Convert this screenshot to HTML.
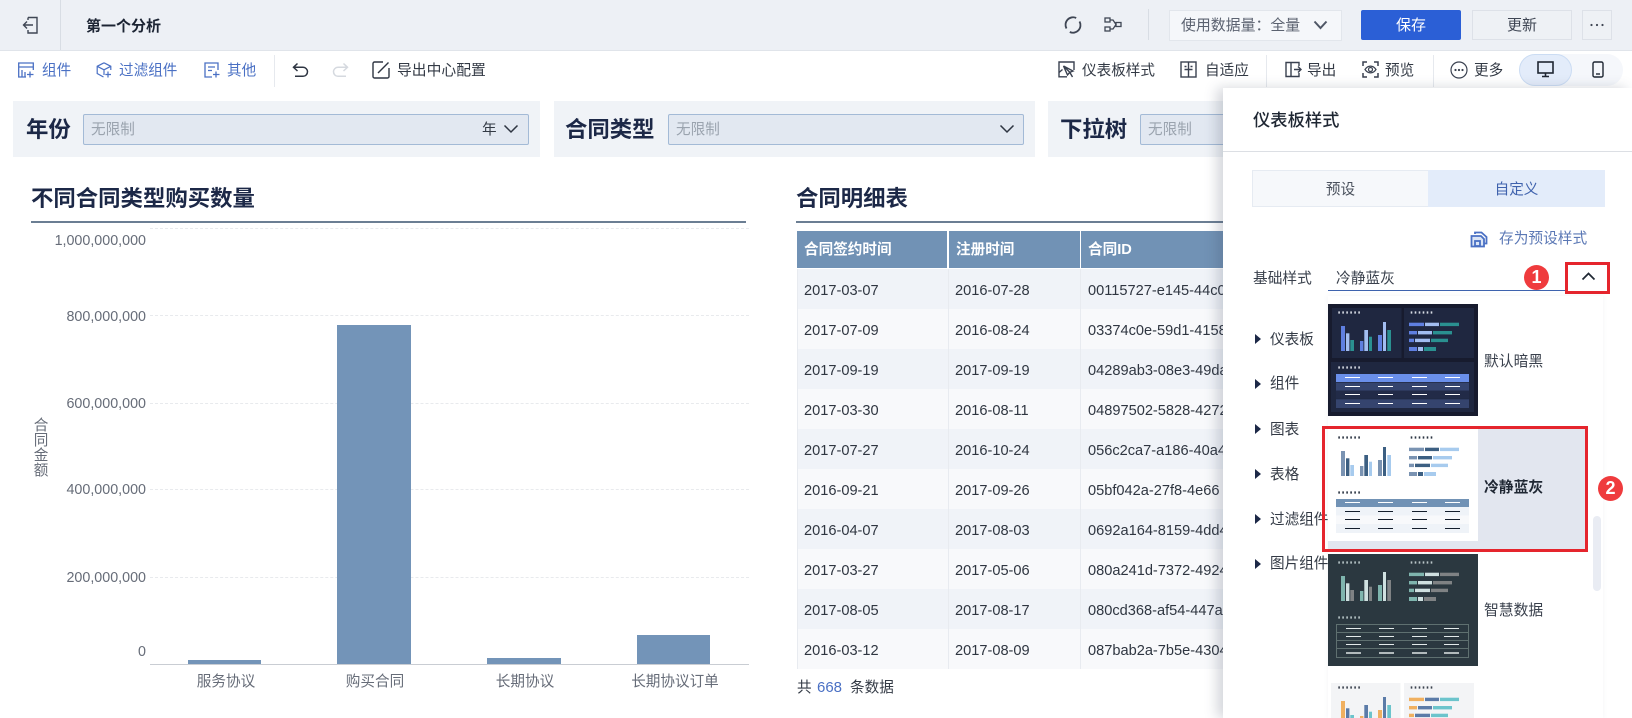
<!DOCTYPE html>
<html lang="zh"><head><meta charset="utf-8"><title>第一个分析</title>
<style>
html,body{margin:0;padding:0;background:#fff}
body{width:1632px;height:718px;position:relative;overflow:hidden;font-family:"Liberation Sans","Noto Sans CJK SC",sans-serif;font-size:14.6px;color:#333a45}
.a{position:absolute}
.t{position:absolute;white-space:nowrap;line-height:20px;height:20px}
.blue{color:#4a70c4}
.l{font-size:22.4px;font-weight:700;color:#1c2847;line-height:30px;height:30px}
.inp{position:absolute;top:114px;height:29px;background:#e2e8f1;border:1px solid #a3bad6;border-radius:2px;box-sizing:content-box}
.ph{color:#9aa3ae}
.f{position:absolute;top:101px;height:56px;background:#f0f3f7}
.yl{position:absolute;right:1486px;white-space:nowrap;line-height:20px;color:#666c78;font-size:14.3px}
.xl{position:absolute;top:672px;width:120px;text-align:center;line-height:20px;color:#666c78}
.bar{position:absolute;background:#7394b8}
.g{position:absolute;left:150px;width:599px;border-top:1px dashed #e8eaed}
.r{position:absolute;left:797px;width:426px;height:40px;line-height:40px;color:#2f3641;white-space:nowrap;overflow:hidden}
.r span{position:absolute;top:1.5px}
.r .c1{left:7px}.r .c2{left:158px}.r .c3{left:291px}
.r.o{background:#f0f3f8}.r.e{background:#f8f9fb}
.th{position:absolute;top:231px;height:37px;line-height:39px;background:#7192b5;color:#fff;font-weight:700;box-sizing:border-box;padding-left:7px}
.tri{position:absolute;left:1255px;width:0;height:0;border-left:6px solid #1c2847;border-top:5px solid transparent;border-bottom:5px solid transparent}
svg.i{position:absolute;overflow:visible;fill:none}
.bd{position:absolute;width:25px;height:25px;border-radius:50%;background:#ef3b3d;color:#fff;font-size:18px;font-weight:700;line-height:25px;text-align:center}
</style></head><body>

<svg width="0" height="0" style="position:absolute">
<symbol id="th" viewBox="0 0 150 112">
<g style="fill:var(--a)"><rect x="13" y="22" width="4" height="25"/><rect x="32" y="37" width="3.4" height="10"/><rect x="50" y="31" width="4" height="16"/><rect x="81" y="18.7" width="15" height="3.4"/><rect x="81" y="27" width="8" height="3.4"/><rect x="81" y="34.7" width="5" height="3.4"/><rect x="81" y="43" width="8" height="4"/></g>
<g style="fill:var(--b)"><rect x="18" y="29.3" width="3.4" height="17.7"/><rect x="36.3" y="26" width="3.7" height="21"/><rect x="55" y="18" width="3" height="29"/><rect x="97" y="18.7" width="14" height="3.4"/><rect x="90" y="27" width="14" height="3.4"/><rect x="87" y="34.7" width="15" height="3.4"/><rect x="90" y="43" width="5" height="4"/></g>
<g style="fill:var(--c)"><rect x="22.3" y="36" width="3.7" height="11"/><rect x="41" y="32.7" width="3" height="14.3"/><rect x="59.3" y="26" width="3.7" height="21"/><rect x="112" y="18.7" width="19" height="3.4"/><rect x="105" y="27" width="19" height="3.4"/><rect x="103" y="34.7" width="17" height="3.4"/><rect x="96" y="43" width="12" height="4"/></g>
<g style="stroke:var(--d)" stroke-width="2.2" stroke-dasharray="1.6 2.4"><path d="M10.3 8.5H34M82.7 8.5H106.5"/></g>
</symbol>
</svg>

<!-- top bar -->
<div class="a" style="left:0;top:0;width:1632px;height:50px;background:#edf0f5;border-bottom:1px solid #e0e4ea"></div>
<div class="a" style="left:60px;top:0;width:1px;height:50px;background:#d8dde4"></div>
<svg class="i" style="left:0;top:0" width="60" height="50" stroke="#3f4654" stroke-width="1.4"><path d="M28 17.5H37V33H28V30M28 17.5V20"/><path d="M33 25H23.5M27 21.5L23.5 25L27 28.5"/></svg>
<div class="t" style="left:86px;top:17px;font-size:15px;font-weight:700;color:#1c2433">第一个分析</div>

<svg class="i" style="left:1064px;top:16px" width="18" height="18" stroke="#3f4654" stroke-width="1.8"><path d="M12.2 2A7.5 7.5 0 0 0 2.5 12.5M5.8 16A7.5 7.5 0 0 0 15.5 5.5"/></svg>
<svg class="i" style="left:1104px;top:17px" width="18" height="16" stroke="#3f4654" stroke-width="1.3"><rect x="1" y="1" width="5" height="4"/><rect x="1" y="10" width="5" height="4"/><rect x="12" y="5.5" width="5" height="4"/><path d="M6 3H9L12 7.5L9 12H6"/></svg>
<div class="a" style="left:1148px;top:9px;width:1px;height:31px;background:#d8dde4"></div>
<div class="a" style="left:1169px;top:10px;width:171px;height:29px;background:#f5f7fa;border:1px solid #e2e6ec"></div>
<div class="t" style="left:1181px;top:16px;color:#5b6270;font-size:14.9px">使用数据量：全量</div>
<svg class="i" style="left:1313px;top:20px" width="16" height="10" stroke="#4f5766" stroke-width="2"><path d="M1.5 1.5L7.5 8L13.5 1.5"/></svg>
<div class="a" style="left:1361px;top:10px;width:100px;height:30px;line-height:32px;background:#2b5fd6;border-radius:2px;color:#fff;text-align:center;font-size:15px">保存</div>
<div class="a" style="left:1472px;top:10px;width:98px;height:28px;line-height:30px;background:#eef1f5;border:1px solid #dde1e8;color:#3f4654;text-align:center;font-size:15px">更新</div>
<div class="a" style="left:1582px;top:10px;width:28px;height:28px;background:#eef1f5;border:1px solid #dde1e8"></div>
<svg class="i" style="left:1582px;top:10px" width="30" height="30"><circle cx="9.5" cy="15" r="1.1" fill="#3f4654"/><circle cx="15" cy="15" r="1.1" fill="#3f4654"/><circle cx="20.5" cy="15" r="1.1" fill="#3f4654"/></svg>

<!-- toolbar left -->
<svg class="i" style="left:18px;top:62px" width="16" height="16" stroke="#4a70c4" stroke-width="1.3"><path d="M15.3 8V1H.7V15H8M.7 5H15.3M4 15V8M7 15V10"/><path d="M12 9.5V15.5M9 12.5H15.5"/></svg>
<div class="t blue" style="left:42px;top:61px">组件</div>
<svg class="i" style="left:96px;top:62px" width="16" height="16" stroke="#4a70c4" stroke-width="1.2"><path d="M8 .8L14.8 4.3V8M8 .8L1.2 4.3V11.5L7.5 15M1.2 4.3L8 7.8L14.8 4.3M8 7.8V13"/><path d="M12 9.5V15.5M9.3 12.5H15"/></svg>
<div class="t blue" style="left:119px;top:61px">过滤组件</div>
<svg class="i" style="left:204px;top:62px" width="16" height="16" stroke="#4a70c4" stroke-width="1.3"><path d="M14 8V1H1V15H8M4 5H11M4 8.5H8"/><path d="M12 9.5V15.5M9 12.5H15.5"/></svg>
<div class="t blue" style="left:227px;top:61px">其他</div>
<div class="a" style="left:274px;top:55px;width:1px;height:32px;background:#e6e9ee"></div>
<svg class="i" style="left:292px;top:62px" width="17" height="16" stroke="#2e3542" stroke-width="1.5"><path d="M5.5 1.5L1.5 5.3L5.5 9M1.5 5.3H11A4.5 4.5 0 0 1 11 14.3H3"/></svg>
<svg class="i" style="left:332px;top:62px" width="17" height="16" stroke="#d5d9df" stroke-width="1.5"><path d="M11.5 1.5L15.5 5.3L11.5 9M15.5 5.3H6A4.5 4.5 0 0 0 6 14.3H14"/></svg>
<svg class="i" style="left:372px;top:61px" width="18" height="18" stroke="#2e3542" stroke-width="1.4"><path d="M11 1H2.5A1.5 1.5 0 0 0 1 2.5V15.5A1.5 1.5 0 0 0 2.5 17H15.5A1.5 1.5 0 0 0 17 15.5V7"/><path d="M6 12L16.5 1.5"/></svg>
<div class="t" style="left:397px;top:61px;font-size:14.8px">导出中心配置</div>

<!-- toolbar right -->
<svg class="i" style="left:1058px;top:61px" width="17" height="17" stroke="#3a4150" stroke-width="1.4"><path d="M9 15.8H1V1H16V9"/><path d="M5.5 5L15 10L11.8 11.3L14.5 16M11.8 11.3L9.5 14L5.5 5Z"/><path d="M1 11.5L4.5 8.5"/></svg>
<div class="t" style="left:1082px;top:61px">仪表板样式</div>
<svg class="i" style="left:1180px;top:61px" width="17" height="17" stroke="#3a4150" stroke-width="1.4"><rect x="1" y="1" width="15" height="15"/><path d="M8.5 1V16M4.5 8.5H12.5M4.5 5.5H6.5M10.5 5.5H12.5"/></svg>
<div class="t" style="left:1205px;top:61px">自适应</div>
<div class="a" style="left:1266px;top:55px;width:1px;height:32px;background:#e6e9ee"></div>
<svg class="i" style="left:1285px;top:61px" width="17" height="17" stroke="#3a4150" stroke-width="1.4"><path d="M6 1.5H1V15.5H6V1.5ZM6 1.5H14V5M6 15.5H14V12"/><path d="M9 8.5H16M13 5.5L16 8.5L13 11.5"/></svg>
<div class="t" style="left:1307px;top:61px">导出</div>
<svg class="i" style="left:1362px;top:61px" width="17" height="17" stroke="#3a4150" stroke-width="1.5"><path d="M1 5V1H5M12 1H16V5M16 12V16H12M5 16H1V12"/><path d="M3 8.5C6 4 11 4 14 8.5C11 13 6 13 3 8.5Z" stroke-width="1.2"/><circle cx="8.5" cy="8.5" r="2" stroke-width="1.2"/></svg>
<div class="t" style="left:1385px;top:61px">预览</div>
<div class="a" style="left:1433px;top:55px;width:1px;height:32px;background:#e6e9ee"></div>
<svg class="i" style="left:1450px;top:61px" width="18" height="18" stroke="#3a4150" stroke-width="1.2"><circle cx="9" cy="9" r="8"/><circle cx="5.5" cy="9" r=".5" fill="#3a4150"/><circle cx="9" cy="9" r=".5" fill="#3a4150"/><circle cx="12.5" cy="9" r=".5" fill="#3a4150"/></svg>
<div class="t" style="left:1474px;top:61px">更多</div>
<div class="a" style="left:1519px;top:54px;width:104px;height:32px;background:#f5f7fb;border-radius:16px"></div>
<div class="a" style="left:1519px;top:54px;width:51px;height:30px;background:#e3ecfa;border:1px solid #cbdcf3;border-radius:16px"></div>
<svg class="i" style="left:1537px;top:61px" width="17" height="17" stroke="#1f2733" stroke-width="1.6"><rect x="1" y="1" width="15" height="11"/><path d="M8.5 12V15.5M5 15.5H12"/></svg>
<svg class="i" style="left:1592px;top:61px" width="12" height="17" stroke="#1f2733" stroke-width="1.4"><rect x="1" y="1" width="10" height="15" rx="1.5"/><path d="M4 13H8"/></svg>

<!-- filters -->
<div class="f" style="left:13px;width:527px"></div>
<div class="t l" style="left:26px;top:115px">年份</div>
<div class="inp" style="left:83px;width:444px"></div>
<div class="t ph" style="left:91px;top:120px">无限制</div>
<div class="t" style="left:482px;top:120px">年</div>
<svg class="i" style="left:503px;top:124px" width="16" height="10" stroke="#2e3542" stroke-width="1.5"><path d="M1.5 1.5L8 8L14.5 1.5"/></svg>

<div class="f" style="left:554px;width:481px"></div>
<div class="t l" style="left:565px;top:115px">合同类型</div>
<div class="inp" style="left:668px;width:354px"></div>
<div class="t ph" style="left:676px;top:120px">无限制</div>
<svg class="i" style="left:999px;top:124px" width="16" height="10" stroke="#2e3542" stroke-width="1.5"><path d="M1.5 1.5L8 8L14.5 1.5"/></svg>

<div class="f" style="left:1048px;width:180px"></div>
<div class="t l" style="left:1060px;top:115px">下拉树</div>
<div class="inp" style="left:1140px;width:90px"></div>
<div class="t ph" style="left:1148px;top:120px">无限制</div>

<!-- chart -->
<div class="t l" style="left:31px;top:184px">不同合同类型购买数量</div>
<div class="a" style="left:31px;top:221px;width:715px;height:2px;background:#6b7e93"></div>
<div class="g" style="top:228px"></div><div class="g" style="top:315px"></div><div class="g" style="top:403px"></div><div class="g" style="top:489px"></div><div class="g" style="top:577px"></div>
<div class="a" style="left:150px;top:664px;width:599px;height:1px;background:#c9cdd3"></div>
<div class="yl" style="top:231px">1,000,000,000</div>
<div class="yl" style="top:307px">800,000,000</div>
<div class="yl" style="top:394px">600,000,000</div>
<div class="yl" style="top:480px">400,000,000</div>
<div class="yl" style="top:568px">200,000,000</div>
<div class="yl" style="top:642px">0</div>
<div class="a" style="left:32px;top:419px;width:18px;color:#666c78;line-height:15px;text-align:center;font-size:14.6px">合<br>同<br>金<br>额</div>
<div class="bar" style="left:188px;top:660px;width:73px;height:4px"></div>
<div class="bar" style="left:337px;top:325px;width:74px;height:339px"></div>
<div class="bar" style="left:487px;top:658px;width:74px;height:6px"></div>
<div class="bar" style="left:637px;top:635px;width:73px;height:29px"></div>
<div class="xl" style="left:166px">服务协议</div>
<div class="xl" style="left:315px">购买合同</div>
<div class="xl" style="left:465px">长期协议</div>
<div class="xl" style="left:615px">长期协议订单</div>

<!-- table -->
<div class="t l" style="left:796px;top:184px">合同明细表</div>
<div class="a" style="left:796px;top:221px;width:430px;height:2px;background:#6b7e93"></div>
<div class="th" style="left:797px;width:150px">合同签约时间</div>
<div class="th" style="left:949px;width:131px">注册时间</div>
<div class="th" style="left:1081px;width:142px">合同ID</div>
<div class="r o" style="top:269px"><span class="c1">2017-03-07</span><span class="c2">2016-07-28</span><span class="c3">00115727-e145-44c0</span></div>
<div class="r e" style="top:309px"><span class="c1">2017-07-09</span><span class="c2">2016-08-24</span><span class="c3">03374c0e-59d1-4158</span></div>
<div class="r o" style="top:349px"><span class="c1">2017-09-19</span><span class="c2">2017-09-19</span><span class="c3">04289ab3-08e3-49da</span></div>
<div class="r e" style="top:389px"><span class="c1">2017-03-30</span><span class="c2">2016-08-11</span><span class="c3">04897502-5828-4272</span></div>
<div class="r o" style="top:429px"><span class="c1">2017-07-27</span><span class="c2">2016-10-24</span><span class="c3">056c2ca7-a186-40a4</span></div>
<div class="r e" style="top:469px"><span class="c1">2016-09-21</span><span class="c2">2017-09-26</span><span class="c3">05bf042a-27f8-4e66</span></div>
<div class="r o" style="top:509px"><span class="c1">2016-04-07</span><span class="c2">2017-08-03</span><span class="c3">0692a164-8159-4dd4</span></div>
<div class="r e" style="top:549px"><span class="c1">2017-03-27</span><span class="c2">2017-05-06</span><span class="c3">080a241d-7372-4924</span></div>
<div class="r o" style="top:589px"><span class="c1">2017-08-05</span><span class="c2">2017-08-17</span><span class="c3">080cd368-af54-447a</span></div>
<div class="r e" style="top:629px"><span class="c1">2016-03-12</span><span class="c2">2017-08-09</span><span class="c3">087bab2a-7b5e-4304</span></div>
<div class="a" style="left:948px;top:269px;width:1px;height:400px;background:#e8ebf0"></div>
<div class="a" style="left:1080px;top:269px;width:1px;height:400px;background:#e8ebf0"></div>
<div class="a" style="left:797px;top:269px;width:1px;height:400px;background:#e8ebf0"></div>
<div class="t" style="left:797px;top:678px">共</div>
<div class="t" style="left:817px;top:678px;color:#4a70c4;font-size:15px">668</div>
<div class="t" style="left:850px;top:678px">条数据</div>

<!-- panel -->
<div class="a" style="left:1223px;top:88px;width:409px;height:630px;background:#fff;box-shadow:-6px 0 12px rgba(60,70,90,.22)"></div>
<div class="t" style="left:1253px;top:110px;font-size:17.3px;color:#1f2733;font-weight:500">仪表板样式</div>
<div class="a" style="left:1223px;top:151px;width:409px;height:1px;background:#dcdfe4"></div>
<div class="a" style="left:1252px;top:170px;width:175px;height:35px;line-height:39px;background:#f6f8fb;border:1px solid #e6ebf2;border-right:0;text-align:center;color:#4a515d">预设</div>
<div class="a" style="left:1428px;top:170px;width:175px;height:35px;line-height:39px;background:#e3ecfa;border:1px solid #e3ecfa;text-align:center;color:#3f62ad;">自定义</div>
<svg class="i" style="left:1470px;top:231px" width="18" height="17" stroke="#4a70c4" stroke-width="1.8"><path d="M5 3V1.5H11.5L16.5 6V12.5H14"/><path d="M1.5 5H11L14 8V15.5H1.5Z" fill="#dbe5f6"/><rect x="5" y="10" width="5" height="5"/></svg>
<div class="t" style="left:1499px;top:229px;color:#5b78b5;font-size:14.7px">存为预设样式</div>

<div class="t" style="left:1253px;top:269px;color:#3a414d;font-size:14.7px">基础样式</div>
<div class="t" style="left:1336px;top:269px;color:#3a414d;font-size:14.7px">冷静蓝灰</div>
<div class="a" style="left:1328px;top:290px;width:238px;height:1px;background:#3e63ae"></div>
<div class="a" style="left:1565px;top:262px;width:39px;height:26px;border:3px solid #e5252d"></div>
<svg class="i" style="left:1581px;top:272px" width="15" height="9" stroke="#1f2733" stroke-width="1.7"><path d="M1.5 7.5L7.5 1.5L13.5 7.5"/></svg>
<div class="bd" style="left:1524px;top:265px">1</div>

<!-- side list -->
<div class="tri" style="top:334px"></div><div class="t" style="left:1270px;top:330px">仪表板</div>
<div class="tri" style="top:379px"></div><div class="t" style="left:1270px;top:374px">组件</div>
<div class="tri" style="top:424px"></div><div class="t" style="left:1270px;top:420px">图表</div>
<div class="tri" style="top:469px"></div><div class="t" style="left:1270px;top:465px">表格</div>
<div class="tri" style="top:514px"></div><div class="t" style="left:1270px;top:510px">过滤组件</div>
<div class="tri" style="top:559px"></div><div class="t" style="left:1270px;top:554px">图片组件</div>

<!-- dropdown -->
<div class="a" style="left:1328px;top:296px;width:275px;height:422px;background:#fff;box-shadow:0 0 5px rgba(90,100,130,.07)"></div>

<!-- dark thumb -->
<svg class="a" style="left:1328px;top:304px;--a:#5f7fe0;--b:#a2bdf0;--c:#2a9090;--d:#d8dce4" width="150" height="112" viewBox="0 0 150 112">
<rect width="150" height="112" fill="#171b2e"/>
<rect x="4" y="4" width="69.5" height="50" fill="#1f2740"/><rect x="76" y="4" width="70" height="50" fill="#1f2740"/><rect x="3" y="58" width="143" height="50" fill="#1f2740"/>
<use href="#th" width="150" height="112"/>
<path d="M10.3 63.5H34" stroke="#d8dce4" stroke-width="2.2" stroke-dasharray="1.6 2.4"/>
<rect x="8" y="70" width="133" height="8" fill="#6a8fea"/><rect x="8" y="78.7" width="133" height="8" fill="#35446e"/><rect x="8" y="86.7" width="133" height="8" fill="#222b48"/><rect x="8" y="95.3" width="133" height="8.7" fill="#35446e"/>
<path d="M17 73.5H32M50 73.5H65M84 73.5H99M117 73.5H132M17 82.5H32M50 82.5H65M84 82.5H99M117 82.5H132M17 90.5H32M50 90.5H65M84 90.5H99M117 90.5H132M17 99.5H32M50 99.5H65M84 99.5H99M117 99.5H132" stroke="#fff" stroke-width="1"/>
</svg>
<div class="t" style="left:1484px;top:352px;color:#3a414d;font-size:14.8px">默认暗黑</div>

<!-- selected -->
<div class="a" style="left:1328px;top:429px;width:258px;height:120px;background:#e2e6ef"></div>
<svg class="a" style="left:1328px;top:429px;--a:#7a93b2;--b:#3c5f82;--c:#a7cbee;--d:#2a3442" width="150" height="112" viewBox="0 0 150 112">
<rect width="150" height="112" fill="#fff"/>
<use href="#th" width="150" height="112"/>
<path d="M10.3 63.5H34" stroke="#2a3442" stroke-width="2.2" stroke-dasharray="1.6 2.4"/>
<rect x="8" y="70" width="133" height="8" fill="#7192b5"/><rect x="8" y="78" width="133" height="8.5" fill="#eff3f8"/><rect x="8" y="86.5" width="133" height="8.5" fill="#f8f9fb"/><rect x="8" y="95" width="133" height="9" fill="#eff3f8"/>
<path d="M17 73.5H32M50 73.5H65M84 73.5H99M117 73.5H132" stroke="#fff" stroke-width="1"/>
<path d="M17 82.5H32M50 82.5H65M84 82.5H99M117 82.5H132M17 90.5H32M50 90.5H65M84 90.5H99M117 90.5H132M17 99.5H32M50 99.5H65M84 99.5H99M117 99.5H132" stroke="#141e2c" stroke-width="1"/>
</svg>
<div class="t" style="left:1484px;top:478px;color:#1f2733;font-size:14.8px;font-weight:700">冷静蓝灰</div>
<div class="a" style="left:1322px;top:426px;width:260px;height:120px;border:3px solid #e5252d"></div>
<div class="bd" style="left:1598px;top:476px">2</div>

<!-- wisdom thumb -->
<svg class="a" style="left:1328px;top:554px;--a:#7fb5ae;--b:#cfe0e0;--c:#7f8284;--d:#b9c6c8" width="150" height="112" viewBox="0 0 150 112">
<rect width="150" height="112" fill="#2b3840"/>
<use href="#th" width="150" height="112"/>
<path d="M10.3 63.5H34" stroke="#b9c6c8" stroke-width="2.2" stroke-dasharray="1.6 2.4"/>
<path d="M8.5 70.5H140.5V103.5H8.5ZM8.5 78.5H140.5M8.5 86.5H140.5M8.5 94.5H140.5" stroke="#5f7070" stroke-width="1" fill="none"/>
<path d="M18 74.5H33M51 74.5H66M84 74.5H99M116 74.5H131M18 82.5H33M51 82.5H66M84 82.5H99M116 82.5H131M18 90.5H33M51 90.5H66M84 90.5H99M116 90.5H131" stroke="#e4ebeb" stroke-width="1"/>
<path d="M18 99H33M51 99H66M84 99H99M116 99H131" stroke="#dfe6e6" stroke-width="1.6"/>
</svg>
<div class="t" style="left:1484px;top:601px;color:#3a414d;font-size:14.8px">智慧数据</div>

<!-- fourth thumb -->
<svg class="a" style="left:1328px;top:679px;--a:#f0b060;--b:#5b7ba8;--c:#6cc4cc;--d:#3a414d" width="150" height="39" viewBox="0 0 150 39" preserveAspectRatio="xMinYMin slice">
<rect x="3" y="4" width="69.5" height="50" fill="#f3f4f6"/><rect x="76" y="4" width="70" height="50" fill="#f3f4f6"/>
<use href="#th" width="150" height="112"/>
</svg>

<div class="a" style="left:1593px;top:516px;width:8px;height:75px;background:#e9ecf3;border-radius:4px"></div>
</body></html>
